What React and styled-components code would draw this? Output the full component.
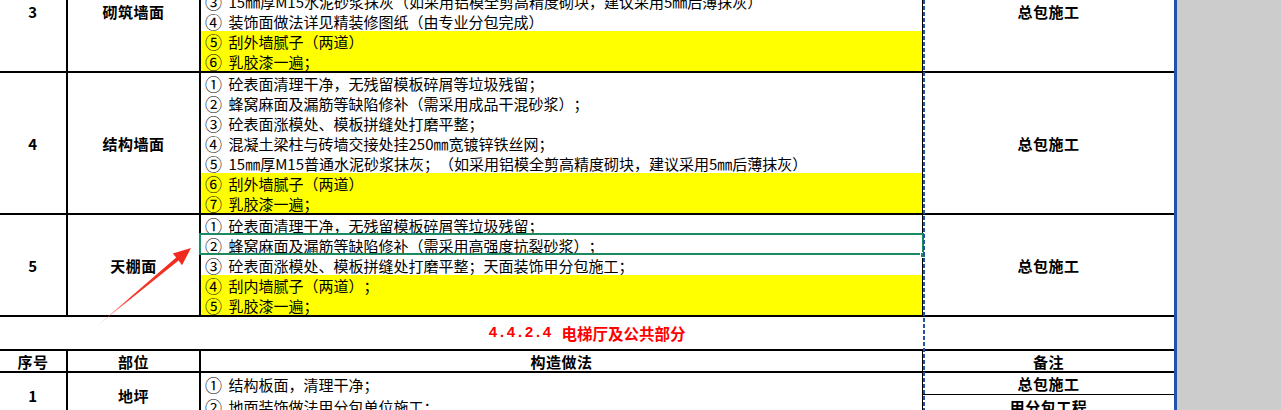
import React from 'react';
import styled, { createGlobalStyle, css } from 'styled-components';

const BLUE = '#2352ad';
const GREEN = '#1a8b60';
const FONT = `"Noto Sans CJK SC", "Noto Sans CJK JP", "Noto Sans", sans-serif`;

const GlobalStyle = createGlobalStyle`
  html, body { margin: 0; padding: 0; background: #cccccc; }
  body {
    font-family: ${FONT};
    color: #000;
    text-spacing-trim: space-all;
    font-kerning: none;
  }
`;

const Page = styled.div`
  position: relative;
  display: flex;
  width: 1281px;
  height: 410px;
  overflow: hidden;
  background: #cccccc;
`;

const PrintArea = styled.div`
  position: relative;
  flex: none;
  width: 1174px;
  background: #ffffff;
  border-right: 3px solid ${BLUE};
  overflow: hidden;
`;

const Sheet = styled.div`
  display: flex;
  flex-direction: column;
  margin-top: -49px;
`;

const Row = styled.div`
  display: flex;
  border-bottom: 2px solid #000;
`;

const NumCell = styled.div`
  flex: none;
  width: 66px;
  border-right: 2px solid #000;
  display: flex;
  align-items: center;
  justify-content: center;
  font: bold 15px ${FONT};
  letter-spacing: 0.5px;
`;

const PartCell = styled(NumCell)`
  width: 131px;
`;

const StepsCell = styled.div`
  flex: none;
  width: 721px;
  border-right: 1px solid #000;
  display: flex;
  flex-direction: column;
  justify-content: ${(p) => (p.$center ? 'center' : 'flex-start')};
  align-items: ${(p) => (p.$center ? 'center' : 'stretch')};
  font: ${(p) => (p.$center ? `bold 15px ${FONT}` : `15px ${FONT}`)};
  letter-spacing: ${(p) => (p.$center ? '0.5px' : '0')};
`;

const NoteCell = styled.div`
  flex: 1;
  display: flex;
  flex-direction: column;
  justify-content: center;
  align-items: stretch;
  font: bold 15px ${FONT};
  letter-spacing: 0.5px;
`;

const NoteText = styled.div`
  display: flex;
  align-items: center;
  justify-content: center;
  height: ${(p) => p.$h || 'auto'};
  border-bottom: ${(p) => (p.$divided ? '1px solid #000' : 'none')};
`;

const Line = styled.div`
  position: relative;
  height: ${(p) => p.$h || 20}px;
  display: flex;
  align-items: center;
  padding-left: 4px;
  white-space: nowrap;
  font-size: 15px;
  background: ${(p) => (p.$hl ? '#ffff00' : 'transparent')};
  ${(p) =>
    p.$selected &&
    css`
      &::before {
        content: '';
        position: absolute;
        left: -2px;
        right: -2px;
        top: -2px;
        bottom: 0;
        border: 2px solid ${GREEN};
      }
      &::after {
        content: '';
        position: absolute;
        right: -4px;
        bottom: -3px;
        width: 6px;
        height: 6px;
        background: ${GREEN};
        border: 1px solid #fff;
        box-sizing: border-box;
      }
    `}
`;

const Marker = styled.span`
  display: inline-flex;
  align-items: center;
  flex: none;
  width: 23.5px;
  font-size: 17px;
  line-height: 1;
`;

const TitleRow = styled(Row)`
  height: 32px;
  align-items: center;
  justify-content: center;
  color: #ff0000;
  font: bold 15.5px ${FONT};
`;

const SectionNo = styled.span`
  font-family: "Liberation Mono", monospace;
  font-size: 15px;
  font-weight: bold;
  margin-right: 10px;
`;

const HeaderRow = styled(Row)`
  height: 20px;
`;

const PageBreak = styled.div`
  position: absolute;
  left: 923px;
  top: 0;
  bottom: 0;
  width: 2px;
  background: repeating-linear-gradient(to bottom, ${BLUE} 0 4px, transparent 4px 6px);
`;

const ArrowLayer = styled.svg`
  position: absolute;
  left: 0;
  top: 0;
  pointer-events: none;
`;

const sections = [
  {
    no: '3',
    part: '砌筑墙面',
    note: '总包施工',
    lines: [
      ['①', '基层清理干净，墙面浇水湿润；'],
      ['②', '混凝土梁柱与砌体交接处挂250㎜宽镀锌铁丝网；'],
      ['③', '15㎜厚M15水泥砂浆抹灰（如采用铝模全剪高精度砌块，建议采用5㎜后薄抹灰）'],
      ['④', '装饰面做法详见精装修图纸（由专业分包完成）'],
      ['⑤', '刮外墙腻子（两道）', 'hl'],
      ['⑥', '乳胶漆一遍；', 'hl'],
    ],
  },
  {
    no: '4',
    part: '结构墙面',
    note: '总包施工',
    lines: [
      ['①', '砼表面清理干净，无残留模板碎屑等垃圾残留；'],
      ['②', '蜂窝麻面及漏筋等缺陷修补（需采用成品干混砂浆）；'],
      ['③', '砼表面涨模处、模板拼缝处打磨平整；'],
      ['④', '混凝土梁柱与砖墙交接处挂250㎜宽镀锌铁丝网；'],
      ['⑤', '15㎜厚M15普通水泥砂浆抹灰；（如采用铝模全剪高精度砌块，建议采用5㎜后薄抹灰）'],
      ['⑥', '刮外墙腻子（两道）', 'hl'],
      ['⑦', '乳胶漆一遍；', 'hl'],
    ],
  },
  {
    no: '5',
    part: '天棚面',
    note: '总包施工',
    lines: [
      ['①', '砼表面清理干净，无残留模板碎屑等垃圾残留；'],
      ['②', '蜂窝麻面及漏筋等缺陷修补（需采用高强度抗裂砂浆）；', 'sel'],
      ['③', '砼表面涨模处、模板拼缝处打磨平整；天面装饰甲分包施工；'],
      ['④', '刮内墙腻子（两道）；', 'hl'],
      ['⑤', '乳胶漆一遍；', 'hl'],
    ],
  },
];

function StepLine({ mark, text, flag, h }) {
  return (
    <Line $hl={flag === 'hl'} $selected={flag === 'sel'} $h={h}>
      <Marker>{mark}</Marker>
      {text}
    </Line>
  );
}

export default function App() {
  return (
    <>
      <GlobalStyle />
      <Page>
        <PrintArea>
          <Sheet>
            {sections.map((s) => (
              <Row key={s.no}>
                <NumCell>{s.no}</NumCell>
                <PartCell>{s.part}</PartCell>
                <StepsCell>
                  {s.lines.map(([m, t, f]) => (
                    <StepLine key={m} mark={m} text={t} flag={f} />
                  ))}
                </StepsCell>
                <NoteCell>
                  <NoteText>{s.note}</NoteText>
                </NoteCell>
              </Row>
            ))}
            <TitleRow>
              <SectionNo>4.4.2.4</SectionNo>
              电梯厅及公共部分
            </TitleRow>
            <HeaderRow>
              <NumCell>序号</NumCell>
              <PartCell>部位</PartCell>
              <StepsCell $center>构造做法</StepsCell>
              <NoteCell>
                <NoteText>备注</NoteText>
              </NoteCell>
            </HeaderRow>
            <Row>
              <NumCell>1</NumCell>
              <PartCell>地坪</PartCell>
              <StepsCell>
                <StepLine mark="①" text="结构板面，清理干净；" h={22} />
                <StepLine mark="②" text="地面装饰做法甲分包单位施工；" h={22} />
              </StepsCell>
              <NoteCell>
                <NoteText $h="21px" $divided>总包施工</NoteText>
                <NoteText $h="22px">甲分包工程</NoteText>
              </NoteCell>
            </Row>
          </Sheet>
          <PageBreak />
        </PrintArea>
        <ArrowLayer width="1281" height="410" viewBox="0 0 1281 410">
          <defs>
            <linearGradient id="arrowFill" x1="97" y1="326" x2="191" y2="248" gradientUnits="userSpaceOnUse">
              <stop offset="0" stopColor="#ff6a5e" stopOpacity="0.35" />
              <stop offset="0.35" stopColor="#f5392c" />
              <stop offset="1" stopColor="#f0281e" />
            </linearGradient>
          </defs>
          <polygon
            points="97,326 176.2,257.6 172.8,253.6 191,248 182,265.2 178.6,260.6"
            fill="url(#arrowFill)"
          />
        </ArrowLayer>
      </Page>
    </>
  );
}
